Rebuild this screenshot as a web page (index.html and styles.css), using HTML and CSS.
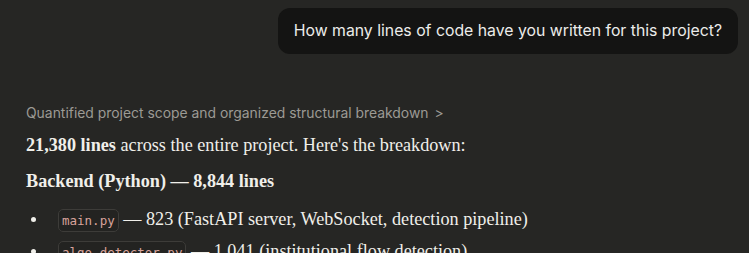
FILE: index.html
```html
<!DOCTYPE html>
<html>
<head>
<meta charset="utf-8">
<link rel="stylesheet" href="styles.css">
</head>
<body>
<div class="page">
  <div class="user-row">
    <div class="bubble">How many lines of code have you written for this project?</div>
  </div>
  <div class="thinking">Quantified project scope and organized structural breakdown <span class="chev">&gt;</span></div>
  <p class="para"><strong>21,380 lines</strong> across the entire project. Here's the breakdown:</p>
  <p class="para heading"><strong>Backend (Python) — 8,844 lines</strong></p>
  <ul class="list">
    <li><code>main.py</code> — 823 (FastAPI server, WebSocket, detection pipeline)</li>
    <li><code>algo_detector.py</code> — 1,041 (institutional flow detection)</li>
  </ul>
</div>
</body>
</html>
```

FILE: styles.css
```css
html, body {
  margin: 0;
  padding: 0;
  background: #262624;
}
.page {
  padding: 8px 11px 0 26px;
}
.user-row {
  display: flex;
  justify-content: flex-end;
}
.bubble {
  background: #141413;
  color: #ececea;
  font-family: Inter, "Noto Sans", sans-serif;
  font-size: 15.8px;
  line-height: 22px;
  padding: 12px 16px 12px 16px;
  border-radius: 12px;
}
.thinking {
  margin-top: 49px;
  color: #9c9a94;
  font-family: Inter, "Noto Sans", sans-serif;
  font-size: 13.9px;
  line-height: 20px;
}
.chev {
  margin-left: 2px;
}
.para {
  margin: 10px 0 0 0;
  color: #f0efea;
  font-family: "Liberation Serif", serif;
  font-size: 18.2px;
  line-height: 24px;
}
.heading {
  margin-top: 12px;
}
.list {
  list-style: none;
  margin: 14px 0 0 0;
  padding-left: 32px;
  color: #f0efea;
  font-family: "Liberation Serif", serif;
  font-size: 18.2px;
  line-height: 24px;
}
.list li {
  position: relative;
  margin-bottom: 6px;
}
.list li::before {
  content: "";
  position: absolute;
  left: -27px;
  top: 10px;
  width: 5px;
  height: 5px;
  border-radius: 50%;
  background: #f0efea;
}
code {
  font-family: "DejaVu Sans Mono", monospace;
  font-size: 12.5px;
  color: #d9a39c;
  background: #232321;
  border: 1px solid #3d3c39;
  border-radius: 5px;
  padding: 3px 3px;
}
```
